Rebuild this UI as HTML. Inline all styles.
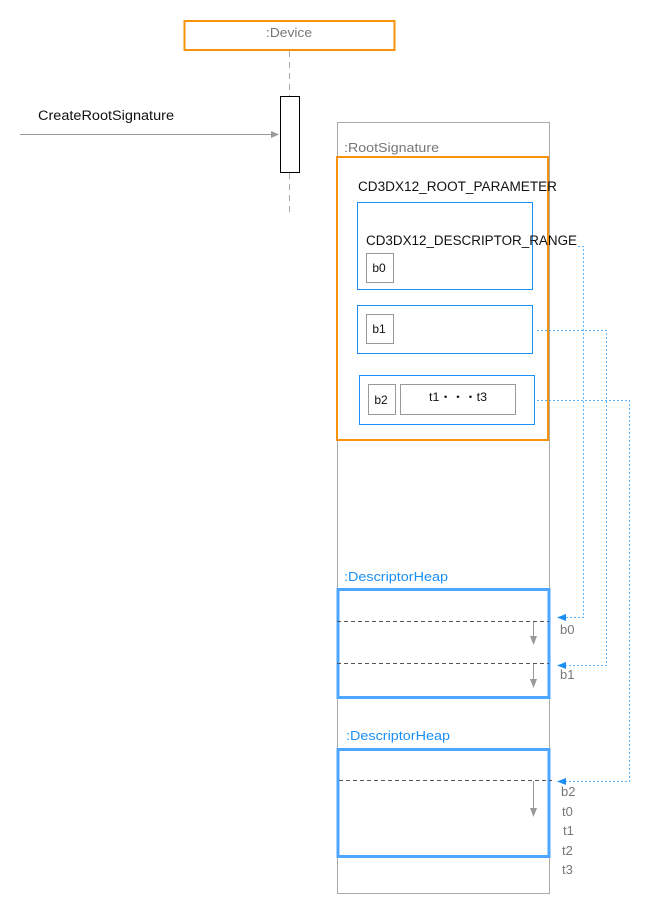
<!DOCTYPE html>
<html><head><meta charset="utf-8"><style>
html,body{margin:0;padding:0;background:#fff;width:650px;height:915px;overflow:hidden}
svg{display:block;font-family:"Liberation Sans",sans-serif}
</style></head><body>
<svg width="650" height="915" viewBox="0 0 650 915" xmlns="http://www.w3.org/2000/svg">
<rect x="184.5" y="21" width="210" height="29" fill="#fff" stroke="#f7930b" stroke-width="2"/>
<text x="266" y="37" font-size="12.5" fill="#777" textLength="46" lengthAdjust="spacingAndGlyphs">:Device</text>
<line x1="289.5" y1="51" x2="289.5" y2="97" stroke="#aaa" stroke-dasharray="6,5"/>
<line x1="289.5" y1="173" x2="289.5" y2="215" stroke="#aaa" stroke-dasharray="6,5"/>
<rect x="280.5" y="96.5" width="19" height="76" fill="#fff" stroke="#000"/>
<line x1="20" y1="134.5" x2="272" y2="134.5" stroke="#999"/>
<polygon points="279,134.5 271,131 271,138" fill="#999"/>
<text x="38" y="120" font-size="13.5" fill="#111" textLength="136" lengthAdjust="spacingAndGlyphs">CreateRootSignature</text>
<rect x="337.5" y="122.5" width="212" height="771" fill="none" stroke="#aaa"/>
<text x="344" y="152" font-size="12.5" fill="#777" textLength="95" lengthAdjust="spacingAndGlyphs">:RootSignature</text>
<rect x="337" y="157" width="211" height="283" fill="none" stroke="#f7930b" stroke-width="2"/>
<text x="358" y="191" font-size="13.5" fill="#111" textLength="199" lengthAdjust="spacingAndGlyphs">CD3DX12_ROOT_PARAMETER</text>
<rect x="357.5" y="202.5" width="175" height="87" fill="none" stroke="#1a8ff5"/>
<text x="366" y="245" font-size="13.5" fill="#111" textLength="211" lengthAdjust="spacingAndGlyphs">CD3DX12_DESCRIPTOR_RANGE</text>
<rect x="366.5" y="253.5" width="27" height="29" fill="none" stroke="#999"/>
<text x="379" y="272" font-size="12" fill="#111" text-anchor="middle">b0</text>
<rect x="357.5" y="305.5" width="175" height="48" fill="none" stroke="#1a8ff5"/>
<rect x="366.5" y="314.5" width="27" height="29" fill="none" stroke="#999"/>
<text x="379" y="333" font-size="12" fill="#111" text-anchor="middle">b1</text>
<rect x="359.5" y="375.5" width="175" height="49" fill="none" stroke="#1a8ff5"/>
<rect x="368.5" y="384.5" width="27" height="30" fill="none" stroke="#999"/>
<text x="381" y="404" font-size="12" fill="#111" text-anchor="middle">b2</text>
<rect x="400.5" y="384.5" width="115" height="30" fill="none" stroke="#999"/>
<text x="429" y="401" font-size="12" fill="#111" textLength="58" lengthAdjust="spacingAndGlyphs">t1・・・t3</text>
<g stroke="#5ab4ff" fill="none" stroke-dasharray="2,2">
<polyline points="578,246.5 583.5,246.5 583.5,617.5 566,617.5"/>
<polyline points="537,330.5 606.5,330.5 606.5,665.5 566,665.5"/>
<polyline points="537,400.5 629.5,400.5 629.5,781.5 566,781.5"/>
</g>
<g fill="#1a8ff5">
<polygon points="557,617.5 566,614 566,621"/>
<polygon points="557,665.5 566,662 566,669"/>
<polygon points="557,781.5 566,778 566,785"/>
</g>
<text x="344" y="581" font-size="12.5" fill="#1a8ff5" textLength="104" lengthAdjust="spacingAndGlyphs">:DescriptorHeap</text>
<rect x="338" y="589.5" width="211" height="108" fill="none" stroke="#4da6ff" stroke-width="3"/>
<line x1="337" y1="621.5" x2="549" y2="621.5" stroke="#555" stroke-dasharray="4,3"/>
<line x1="337" y1="663.5" x2="549" y2="663.5" stroke="#555" stroke-dasharray="4,3"/>
<line x1="533.5" y1="622" x2="533.5" y2="637" stroke="#999"/>
<polygon points="533.5,645 530,636 537,636" fill="#999"/>
<line x1="533.5" y1="664" x2="533.5" y2="680" stroke="#999"/>
<polygon points="533.5,688 530,679 537,679" fill="#999"/>
<text x="560" y="634" font-size="13" fill="#777">b0</text>
<text x="560" y="679" font-size="13" fill="#777">b1</text>
<text x="346" y="740" font-size="12.5" fill="#1a8ff5" textLength="104" lengthAdjust="spacingAndGlyphs">:DescriptorHeap</text>
<rect x="338" y="749.5" width="211" height="107" fill="none" stroke="#4da6ff" stroke-width="3"/>
<line x1="339" y1="780.5" x2="552" y2="780.5" stroke="#555" stroke-dasharray="4,3"/>
<line x1="533.5" y1="781" x2="533.5" y2="808" stroke="#999"/>
<polygon points="533.5,817 530,808 537,808" fill="#999"/>
<text x="561" y="796" font-size="13" fill="#777">b2</text>
<text x="562" y="816" font-size="13" fill="#777">t0</text>
<text x="563" y="835" font-size="13" fill="#777">t1</text>
<text x="562" y="855" font-size="13" fill="#777">t2</text>
<text x="562" y="874" font-size="13" fill="#777">t3</text>
</svg>
</body></html>
